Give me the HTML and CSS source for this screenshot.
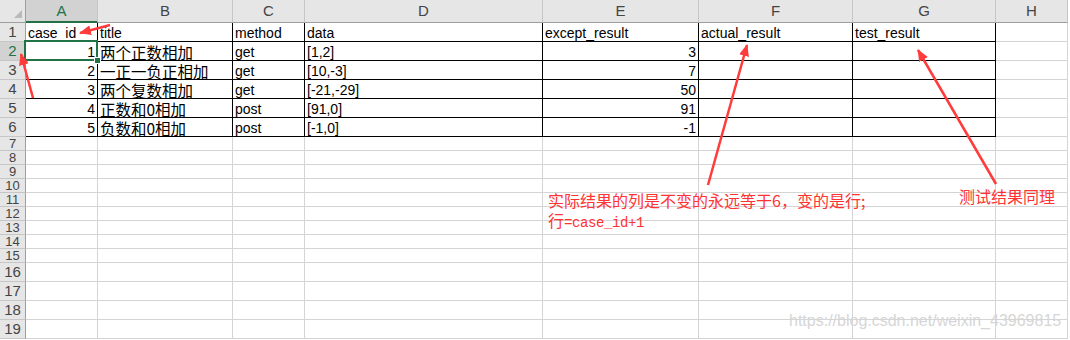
FILE: index.html
```html
<!DOCTYPE html>
<html lang="zh-CN">
<head>
    <meta charset="UTF-8">
    <title>case sheet</title>
    <link rel="stylesheet" href="styles.css">
</head>
<body>
    <div class="page">
        <div class="sheet" id="sheet"></div>

        <!-- annotations drawn over the sheet -->
        <svg class="arrows" width="1070" height="340" viewBox="0 0 1070 340">
            <defs>
                <marker id="head" markerUnits="userSpaceOnUse" markerWidth="12" markerHeight="10" refX="11" refY="5" orient="auto">
                    <path d="M0,0 L12,5 L0,10 z" fill="#ff3b3b"/>
                </marker>
            </defs>
            <line x1="110" y1="25" x2="80" y2="33" marker-end="url(#head)"/>
            <line x1="33" y1="98" x2="21" y2="54" marker-end="url(#head)"/>
            <line x1="708" y1="185" x2="747" y2="45" marker-end="url(#head)"/>
            <line x1="996" y1="184" x2="918" y2="50" marker-end="url(#head)"/>
        </svg>

        <div class="note note-row">
            <div>实际结果的列是不变的永远等于6，变的是行;</div>
            <div>行<span class="mono">=case_id+1</span></div>
        </div>
        <div class="note note-test">测试结果同理</div>
        <div class="watermark">https://blog.csdn.net/weixin_43969815</div>
    </div>

    <script>
        const cols = ['A', 'B', 'C', 'D', 'E', 'F', 'G', 'H'];
        const data = [
            ['case_id', 'title', 'method', 'data', 'except_result', 'actual_result', 'test_result'],
            [1, '两个正数相加', 'get', '[1,2]', 3],
            [2, '一正一负正相加', 'get', '[10,-3]', 7],
            [3, '两个复数相加', 'get', '[-21,-29]', 50],
            [4, '正数和0相加', 'post', '[91,0]', 91],
            [5, '负数和0相加', 'post', '[-1,0]', -1]
        ];
        const sheet = document.getElementById('sheet');

        function add(cls, text) {
            const el = document.createElement('div');
            el.className = cls;
            if (text !== undefined) el.innerHTML = text;
            sheet.appendChild(el);
            return el;
        }

        add('cell corner');
        cols.forEach((c) => {
            add('cell col-head' + (c === 'A' ? ' active' : ''), c);
        });

        for (let r = 1; r <= 19; r++) {
            let headCls = 'cell row-head';
            if (r === 2) headCls += ' active';
            if (r >= 7 && r <= 15) headCls += ' tight'; // rows 7-15 are squeezed
            add(headCls, r);
            const row = data[r - 1] || [];
            cols.forEach((c, i) => {
                let cls = 'cell';
                let text = row[i];
                if (r <= 6 && i < 7) cls += ' boxed';
                if (r > 1 && typeof text === 'number') cls += ' num';
                if (r > 1 && i === 1 && text) text = '<span class="zh">' + text + '</span>';
                if (r === 2 && i === 0) cls += ' selected';
                add(cls, text === undefined ? '' : text);
            });
        }
    </script>
</body>
</html>
```

FILE: styles.css
```css
body {
    margin: 0;
    background-color: #fff;
    font-family: "Liberation Sans", "Noto Sans CJK SC", Arial, sans-serif;
}

.page {
    position: relative;
    width: 1070px;
    height: 340px;
    overflow: hidden;
}

.sheet {
    display: grid;
    grid-template-columns: 26px 72px 135px 72px 238px 156px 154px 143px 72px;
    grid-template-rows: 23px repeat(6, 19px) repeat(9, 14px) repeat(4, 19px);
}

.cell {
    box-sizing: border-box;
    display: flex;
    align-items: flex-end;
    padding: 0 2px;
    border-right: 1px solid #d4d4d4;
    border-bottom: 1px solid #d4d4d4;
    font-size: 14px;
    line-height: 16px;
    white-space: nowrap;
    color: #000;
}

.cell.boxed {
    border-right-color: #000;
    border-bottom-color: #000;
}

.cell.num {
    justify-content: flex-end;
}

.zh {
    font-family: "Noto Sans CJK SC", sans-serif;
    font-size: 15.5px;
    line-height: 16px;
}

.col-head {
    justify-content: center;
    align-items: center;
    background-color: #e6e6e6;
    border-right-color: #c6c6c6;
    border-bottom-color: #9e9e9e;
    font-size: 15px;
    color: #444;
}

.row-head {
    justify-content: center;
    align-items: center;
    overflow: hidden;
    background-color: #e6e6e6;
    border-right-color: #9e9e9e;
    border-bottom-color: #c6c6c6;
    font-size: 15px;
    line-height: 14px;
    color: #444;
}

.row-head.tight {
    font-size: 13px;
    line-height: 13px;
}

.col-head.active,
.row-head.active {
    background-color: #d2d2d2;
    color: #217346;
}

.col-head.active {
    border-bottom: 2px solid #217346;
}

.corner {
    justify-content: flex-end;
    align-items: flex-end;
    padding: 0 3px 4px 0;
    background-color: #e6e6e6;
    border-right-color: #9e9e9e;
    border-bottom-color: #9e9e9e;
}

.corner::before {
    content: '';
    width: 0;
    height: 0;
    border-left: 8px solid transparent;
    border-bottom: 8px solid #b9b9b9;
}

.cell.selected {
    position: relative;
}

.cell.selected::after {
    content: '';
    position: absolute;
    left: -2px;
    top: -2px;
    right: -1px;
    bottom: -1px;
    border: 2px solid #217346;
}

.cell.selected::before {
    content: '';
    position: absolute;
    right: -4px;
    bottom: -4px;
    width: 5px;
    height: 5px;
    background-color: #217346;
    border: 1px solid #fff;
    z-index: 2;
}

.arrows {
    position: absolute;
    left: 0;
    top: 0;
    pointer-events: none;
}

.arrows line {
    stroke: #ff3b3b;
    stroke-width: 2.5;
}

.note {
    position: absolute;
    color: #ff3333;
    font-family: "Noto Sans CJK SC", sans-serif;
    font-size: 16px;
    line-height: 20px;
    white-space: nowrap;
}

.note div {
    height: 20px;
}

.note-row {
    top: 190px;
    left: 548px;
}

.note-test {
    top: 186px;
    left: 959px;
}

.mono {
    font-family: "Liberation Mono", monospace;
    font-size: 14px;
    letter-spacing: -0.4px;
}

.watermark {
    position: absolute;
    left: 789px;
    top: 312px;
    font-size: 16px;
    line-height: 18px;
    color: #d6d6d6;
    white-space: nowrap;
}
```
